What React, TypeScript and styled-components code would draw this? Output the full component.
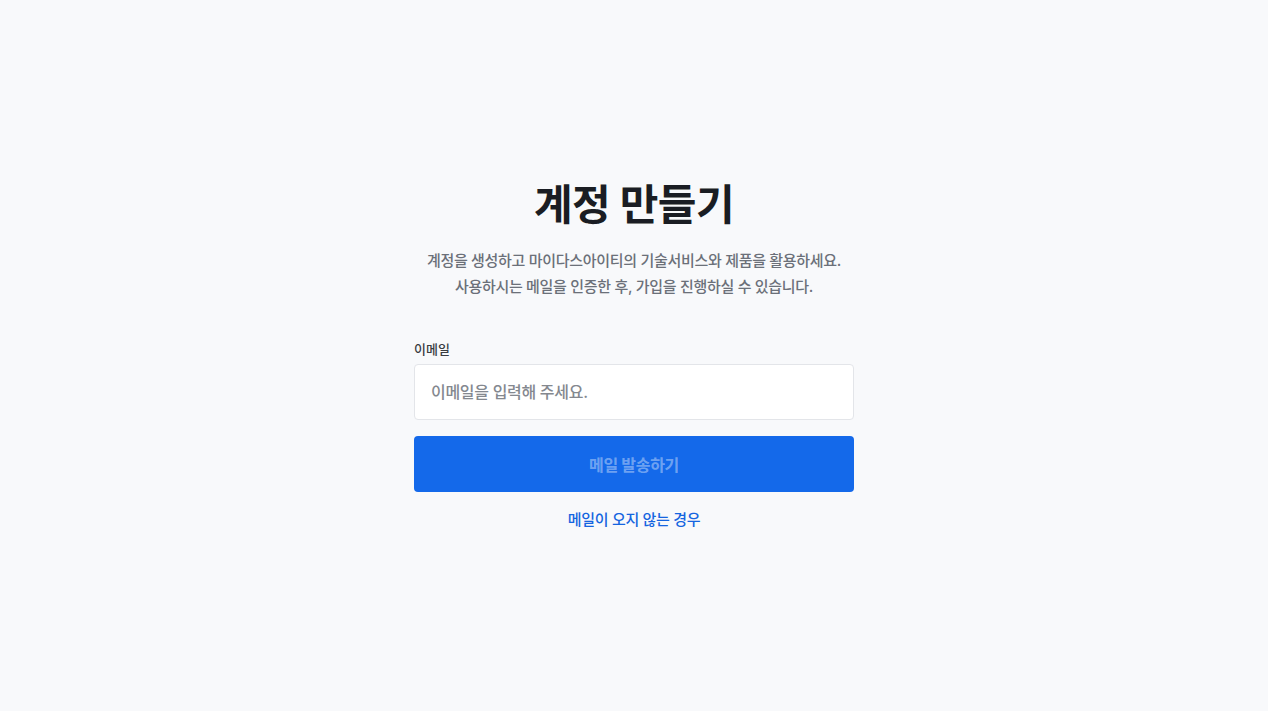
import styled, { createGlobalStyle } from 'styled-components';
import { useState } from 'react';

const GlobalStyle = createGlobalStyle`
  html, body {
    margin: 0;
    padding: 0;
    background-color: #f8f9fb;
    font-family: Inter, "Noto Sans CJK KR", sans-serif;
  }
  * {
    box-sizing: border-box;
  }
`;

const Page = styled.div`
  display: flex;
  justify-content: center;
  min-height: 711px;
  padding-top: 177px;
`;

const SignUpContainer = styled.div`
  display: flex;
  flex-direction: column;
  width: 440px;
`;

const Title = styled.h1`
  margin: 0;
  font-size: 42px;
  line-height: 56px;
  font-weight: 700;
  color: #1a1d23;
  text-align: center;
  letter-spacing: -0.5px;
`;

const Description = styled.p`
  margin: 15px 0 0;
  font-size: 15px;
  line-height: 26px;
  font-weight: 500;
  color: #6b7079;
  text-align: center;
  letter-spacing: -0.3px;
`;

const Form = styled.form`
  display: flex;
  flex-direction: column;
  margin-top: 40px;
`;

const Label = styled.label`
  font-size: 13px;
  line-height: 18px;
  font-weight: 500;
  color: #3a3d42;
  margin-bottom: 6px;
`;

const Input = styled.input`
  height: 56px;
  padding: 0 16px;
  font-family: inherit;
  font-size: 16px;
  font-weight: 500;
  color: #1a1d23;
  background-color: #fff;
  border: 1px solid #e3e5e9;
  border-radius: 4px;
  outline: none;
  letter-spacing: -0.3px;

  &::placeholder {
    color: #84888f;
  }

  &:focus {
    border-color: #1469ea;
  }
`;

const SubmitButton = styled.button`
  height: 56px;
  margin-top: 16px;
  font-family: inherit;
  font-size: 16px;
  font-weight: 700;
  color: rgba(255, 255, 255, 0.4);
  background-color: #1469ea;
  border: none;
  border-radius: 4px;
  letter-spacing: -0.3px;
  cursor: pointer;

  &:enabled {
    color: #fff;
  }
`;

const HelpLink = styled.a`
  align-self: center;
  margin-top: 18px;
  font-size: 15px;
  line-height: 20px;
  font-weight: 500;
  color: #1565e0;
  text-decoration: none;
  letter-spacing: -0.3px;
  cursor: pointer;
`;

const App = () => {
  const [email, setEmail] = useState('');

  return (
    <>
      <GlobalStyle />
      <Page>
        <SignUpContainer>
          <Title>계정 만들기</Title>
          <Description>
            계정을 생성하고 마이다스아이티의 기술서비스와 제품을 활용하세요.
            <br />
            사용하시는 메일을 인증한 후, 가입을 진행하실 수 있습니다.
          </Description>

          <Form onSubmit={e => e.preventDefault()}>
            <Label htmlFor="email">이메일</Label>
            <Input
              id="email"
              type="email"
              placeholder="이메일을 입력해 주세요."
              value={email}
              onChange={e => setEmail(e.target.value)}
            />
            <SubmitButton type="submit" disabled={!email}>
              메일 발송하기
            </SubmitButton>
            <HelpLink>메일이 오지 않는 경우</HelpLink>
          </Form>
        </SignUpContainer>
      </Page>
    </>
  );
};

export default App;
